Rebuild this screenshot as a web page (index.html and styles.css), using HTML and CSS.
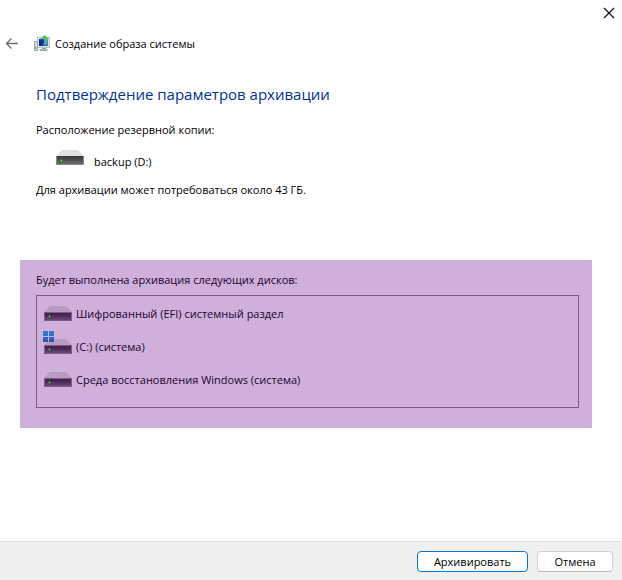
FILE: index.html
```html
<!DOCTYPE html>
<html lang="ru">
<head>
<meta charset="utf-8">
<meta name="viewport" content="width=device-width, initial-scale=1">
<title>Создание образа системы</title>
<link rel="stylesheet" href="styles.css">
</head>
<body>
<svg class="defs" aria-hidden="true">
  <defs>
    <linearGradient id="body-gray" x1="0" y1="0" x2="0" y2="1">
      <stop offset="0" stop-color="#3c3c3c"/><stop offset="0.3" stop-color="#454545"/><stop offset="1" stop-color="#6c6c6c"/>
    </linearGradient>
    <linearGradient id="body-violet" x1="0" y1="0" x2="0" y2="1">
      <stop offset="0" stop-color="#3f2149"/><stop offset="0.4" stop-color="#492a54"/><stop offset="1" stop-color="#6b4a79"/>
    </linearGradient>
    <linearGradient id="logo" x1="0" y1="0" x2="0" y2="1">
      <stop offset="0" stop-color="#3a7bd0"/><stop offset="1" stop-color="#2158b5"/>
    </linearGradient>
    <linearGradient id="screen" x1="0" y1="0" x2="1" y2="0">
      <stop offset="0" stop-color="#0a1fa0"/><stop offset="0.6" stop-color="#1238cc"/><stop offset="1" stop-color="#4b8cf0"/>
    </linearGradient>
    <symbol id="drive" viewBox="0 0 28 15">
      <path d="M6 0h16l6 6H0z" fill="#dfe1e4"/>
      <path d="M0 6h28v9H0z" fill="#8a8a8a"/>
      <path d="M1 6h26v8H1z" fill="url(#body-gray)"/>
      <path d="M4 10h3v1H4zM5 9h1v3H5z" fill="#2a9a38"/><path d="M5 10h1v1H5z" fill="#5dff6c"/>
    </symbol>
    <symbol id="drive-violet" viewBox="0 0 28 15">
      <path d="M6 0h16l6 6H0z" fill="#b79bc3"/>
      <path d="M0 6h28v9H0z" fill="#7c5c8b"/>
      <path d="M1 7h26v7H1z" fill="url(#body-violet)"/>
      <path d="M4 10h3v1H4zM5 9h1v3H5z" fill="#3c8050"/><path d="M5 10h1v1H5z" fill="#58cf68"/>
    </symbol>
  </defs>
</svg>
<div class="window">
  <div class="titlebar">
    <button class="close" type="button" aria-label="Закрыть">
      <svg width="10" height="10" viewBox="0 0 10 10"><path d="M0 0l10 10M10 0L0 10" stroke="#111" stroke-width="1.200" fill="none"/></svg>
    </button>
  </div>
  <header class="header">
    <button class="back" type="button" aria-label="Назад">
      <svg width="12" height="12" viewBox="0 0 12 12"><path d="M12 5.500H1M5.500.5L.5 5.500l5 5" stroke="#707070" stroke-width="1.300" fill="none"/></svg>
    </button>
    <svg class="app-icon" width="16" height="18" viewBox="0 0 16 18" aria-hidden="true">
      <path d="M3 2h13v11H3z" fill="#b8bec6"/><path d="M4 3h11v9H4z" fill="#e2e6ea"/><path d="M5 4h9v7H5z" fill="url(#screen)"/>
      <path d="M8 13h4v1H8z" fill="#8e9599"/><path d="M5 14h9v1H5z" fill="#b8bdc0"/><path d="M6 15h7v1H6z" fill="#979da2"/>
      <path d="M0 6h4v10H0z" fill="#a0a5a9"/><path d="M1 7h2v8H1z" fill="#d5d8d8"/><path d="M1 12h1v2H1z" fill="#4fb452"/>
      <path d="M10.500 0l4 4h-2v3c0 2-1 3-3 3 1-1 1-2 1-3V4h-4z" fill="#3fc447" stroke="#8ade83" stroke-width=".5"/>
    </svg>
    <span>Создание образа системы</span>
  </header>
  <main class="content">
    <h1>Подтверждение параметров архивации</h1>
    <p class="location">Расположение резервной копии:</p>
    <div class="target">
      <svg class="target-icon" width="28" height="15" aria-hidden="true"><use href="#drive"/></svg>
      <span>backup (D:)</span>
    </div>
    <p>Для архивации может потребоваться около 43 ГБ.</p>
  </main>
  <section class="disks">
    <p id="disks-label">Будет выполнена архивация следующих дисков:</p>
    <ul aria-labelledby="disks-label">
      <li><svg width="28" height="15" aria-hidden="true"><use href="#drive-violet"/></svg><span>Шифрованный (EFI) системный раздел</span></li>
      <li><svg width="28" height="15" aria-hidden="true"><use href="#drive-violet"/></svg><svg class="badge" width="11" height="11" viewBox="0 0 11 11" aria-hidden="true"><path d="M0 0h5v5H0zM6 0h5v5H6zM0 6h5v5H0zM6 6h5v5H6z" fill="url(#logo)"/></svg><span>(C:) (система)</span></li>
      <li><svg width="28" height="15" aria-hidden="true"><use href="#drive-violet"/></svg><span>Среда восстановления Windows (система)</span></li>
    </ul>
  </section>
  <footer class="footer">
    <button class="btn primary" type="button">Архивировать</button>
    <button class="btn" type="button">Отмена</button>
  </footer>
</div>
</body>
</html>
```
FILE: styles.css
```css
* {
  box-sizing: border-box;
}

body {
  margin: 0;
  background: #fff;
  color: #000;
  font: 11px/16px "Open Sans", "Noto Sans", sans-serif;
}

button {
  font: inherit;
  color: inherit;
}

h1, p, ul {
  margin: 0;
  padding: 0;
}

svg {
  display: block;
  flex: none;
}

.defs {
  position: absolute;
  width: 0;
  height: 0;
}

.window {
  display: flex;
  flex-direction: column;
  min-height: 100vh;
}

.titlebar {
  display: flex;
  justify-content: flex-end;
  padding: 0 3px;
}

.close,
.back {
  display: flex;
  align-items: center;
  justify-content: center;
  padding: 0;
  border: 0;
  background: none;
}

.close {
  width: 20px;
  height: 26px;
}

.close svg {
  overflow: visible;
}

.header {
  display: flex;
  align-items: center;
  height: 36px;
  padding-left: 4px;
}

.back {
  width: 16px;
  height: 24px;
}

.app-icon {
  margin: 0 5px 0 14px;
}

.content {
  padding: 20px 36px 0;
}

h1 {
  color: #003399;
  font-size: 15px;
  font-weight: 400;
  line-height: 24px;
}

.location {
  margin-top: 16px;
}

.target {
  display: flex;
  align-items: center;
  gap: 10px;
  height: 24px;
  margin: 12px 0 8px;
  padding-left: 20px;
}

.target-icon {
  align-self: flex-start;
}

.disks {
  margin: 62px 30px 0 20px;
  padding: 12px 13px 20px 16px;
  background: #ceb0da;
  color: #220330;
}

.disks ul {
  margin-top: 7px;
  padding: 1px 7px 11px;
  border: 1px solid #7c5c8d;
  list-style: none;
}

.disks li {
  position: relative;
  display: flex;
  align-items: center;
  gap: 4px;
  height: 33px;
}

.badge {
  position: absolute;
  top: 1px;
  left: -1px;
}

.footer {
  display: flex;
  justify-content: flex-end;
  gap: 9px;
  margin-top: auto;
  padding: 9px 9px 8px;
  border-top: 1px solid #dfdfdf;
  background: #f0f0f0;
}

.btn {
  width: 76px;
  height: 21px;
  padding: 0;
  border: 1px solid #d0d0d0;
  border-bottom-color: #b8b8b8;
  border-radius: 4px;
  background: #fdfdfd;
  line-height: 16px;
}

.primary {
  width: 111px;
  border-color: #0078d4;
}
```
